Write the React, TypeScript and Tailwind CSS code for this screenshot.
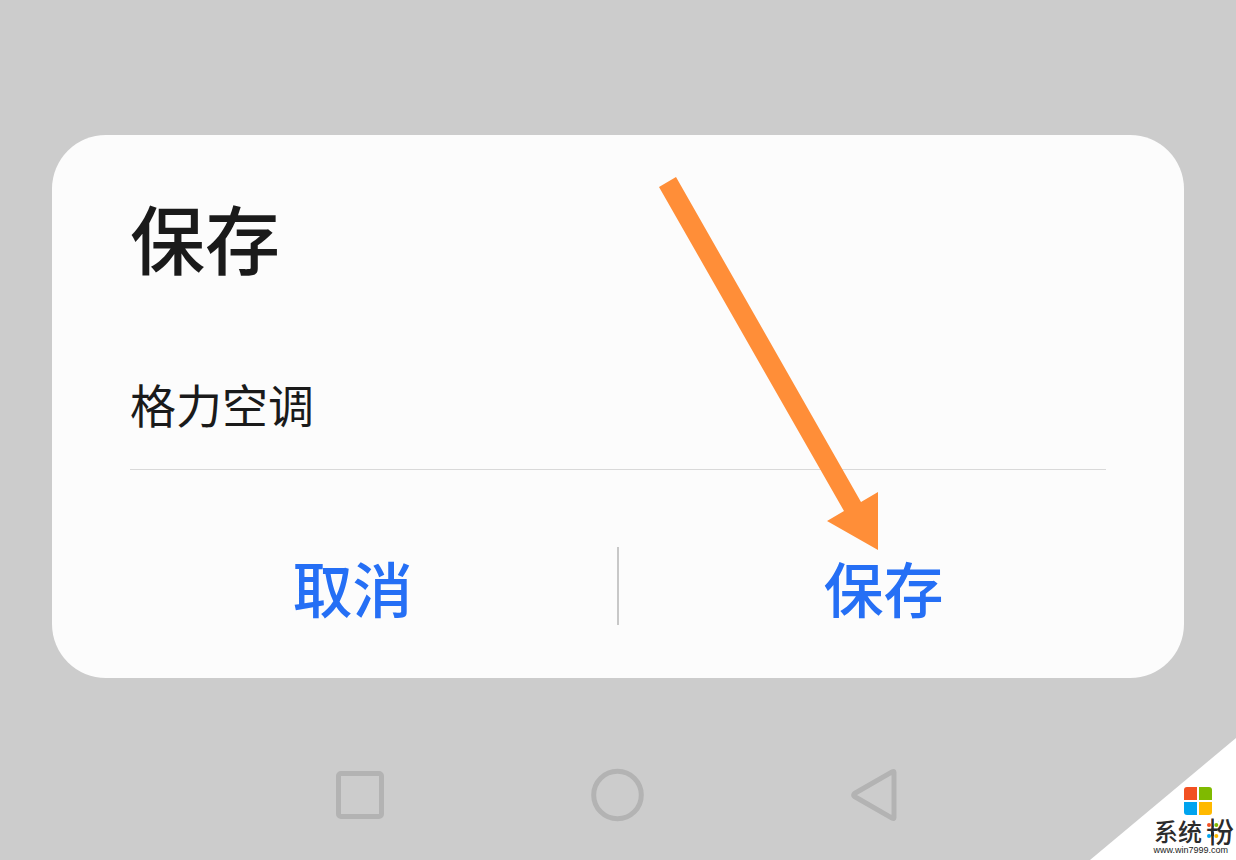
import { useState } from "react";

function SaveDialog() {
  const [name, setName] = useState("格力空调");

  return (
    <form
      role="dialog"
      aria-labelledby="dialog-title"
      className="mx-[52px] rounded-[54px] bg-[#fcfcfc] pt-[58px] pb-[52px]"
      onSubmit={(e) => e.preventDefault()}
    >
      <div className="px-[78px]">
        <h1
          id="dialog-title"
          className="text-[75px] leading-[88px] font-medium text-[#1a1a1a]"
        >
          保存
        </h1>
        <input
          type="text"
          aria-label="名称"
          value={name}
          onChange={(e) => setName(e.target.value)}
          className="mt-[56px] block h-[133px] w-full border-b border-[#d9d9d9] bg-transparent text-[46px] text-[#1a1a1a] outline-none"
        />
      </div>
      <div className="mt-[77px] flex h-[79px] px-9 text-[60px] leading-[80px] font-medium text-[#256ff5]">
        <button type="button" className="flex-1">
          取消
        </button>
        <span className="h-[78px] w-0.5 bg-[#c8c8c8]" />
        <button type="submit" className="flex-1">
          保存
        </button>
      </div>
    </form>
  );
}

function NavBar() {
  return (
    <nav className="mx-auto mt-[85px] grid w-5/8 grid-cols-3 justify-items-center">
      <button type="button" aria-label="最近任务">
        <svg width="64" height="64" fill="none" stroke="#b3b3b3" strokeWidth="5">
          <rect x="9.5" y="10.5" width="43" height="43" rx="2.5" />
        </svg>
      </button>
      <button type="button" aria-label="主屏幕">
        <svg width="64" height="64" fill="none" stroke="#b3b3b3" strokeWidth="5">
          <circle cx="31.5" cy="32" r="23.8" />
        </svg>
      </button>
      <button type="button" aria-label="返回">
        <svg
          width="64"
          height="64"
          fill="none"
          stroke="#b3b3b3"
          strokeWidth="5"
          strokeLinejoin="round"
        >
          <path d="M50 9.500v45q0 1.500-1.500.8L10.500 33.500q-1.500-1.500 0-3L48.500 8.700q1.500-.7 1.500.8Z" />
        </svg>
      </button>
    </nav>
  );
}

function Arrow() {
  return (
    <svg
      className="pointer-events-none absolute top-[177px] left-[658px]"
      width="222"
      height="374"
      fill="#ff8e38"
    >
      <path d="M1 10 18 0 203 325 220 315V373L169 344 186 334Z" />
    </svg>
  );
}

function Watermark() {
  return (
    <div className="absolute right-0 bottom-0 h-[122px] w-[146px]">
      <svg className="absolute inset-0" width="146" height="122">
        <path d="M146 0V122H0Z" fill="#fff" />
      </svg>
      <div className="relative flex h-full flex-col items-end pt-[49px]">
        <svg className="mr-6 shrink-0" width="28" height="28">
          <path d="M3 0h10v13H0V3q0-3 3-3Z" fill="#f25022" />
          <path d="M15 0h10q3 0 3 3v10H15Z" fill="#7fba00" />
          <path d="M0 15h13v13H3q-3 0-3-3Z" fill="#00a4ef" />
          <path d="M15 15h13v10q0 3-3 3H15Z" fill="#ffb900" />
        </svg>
        <div className="relative mt-0.5 mr-0.5 flex h-7 items-center text-[24px] leading-7 font-medium text-[#2b2b2b]">
          <span>系统</span>
          <span className="ml-1 text-[28px]">粉</span>
          <svg className="absolute top-0 right-3" width="16" height="28">
            <path
              d="M0 1h5v10.500H0ZM8 1h4v10H8ZM0 14.500h5V27H0ZM8 14.500h2.500V17H12v7H8Z"
              fill="#fff"
            />
            <circle cx="3" cy="8" r="2" fill="#f25022" />
            <circle cx="10.300" cy="8" r="2" fill="#7fba00" />
            <circle cx="3" cy="19" r="2" fill="#00a4ef" />
            <circle cx="10.300" cy="19" r="2" fill="#ffb900" />
          </svg>
        </div>
        <span className="mr-2 font-['Liberation_Sans',sans-serif] text-[9px] leading-[10px] text-[#222]">
          www.win7999.com
        </span>
      </div>
    </div>
  );
}

function App() {
  return (
    <main
      lang="zh-CN"
      className="relative min-h-screen overflow-hidden bg-[#ccc] pt-[135px] font-['Noto_Sans_CJK_SC',sans-serif]"
    >
      <SaveDialog />
      <NavBar />
      <Arrow />
      <Watermark />
    </main>
  );
}

export default App;
